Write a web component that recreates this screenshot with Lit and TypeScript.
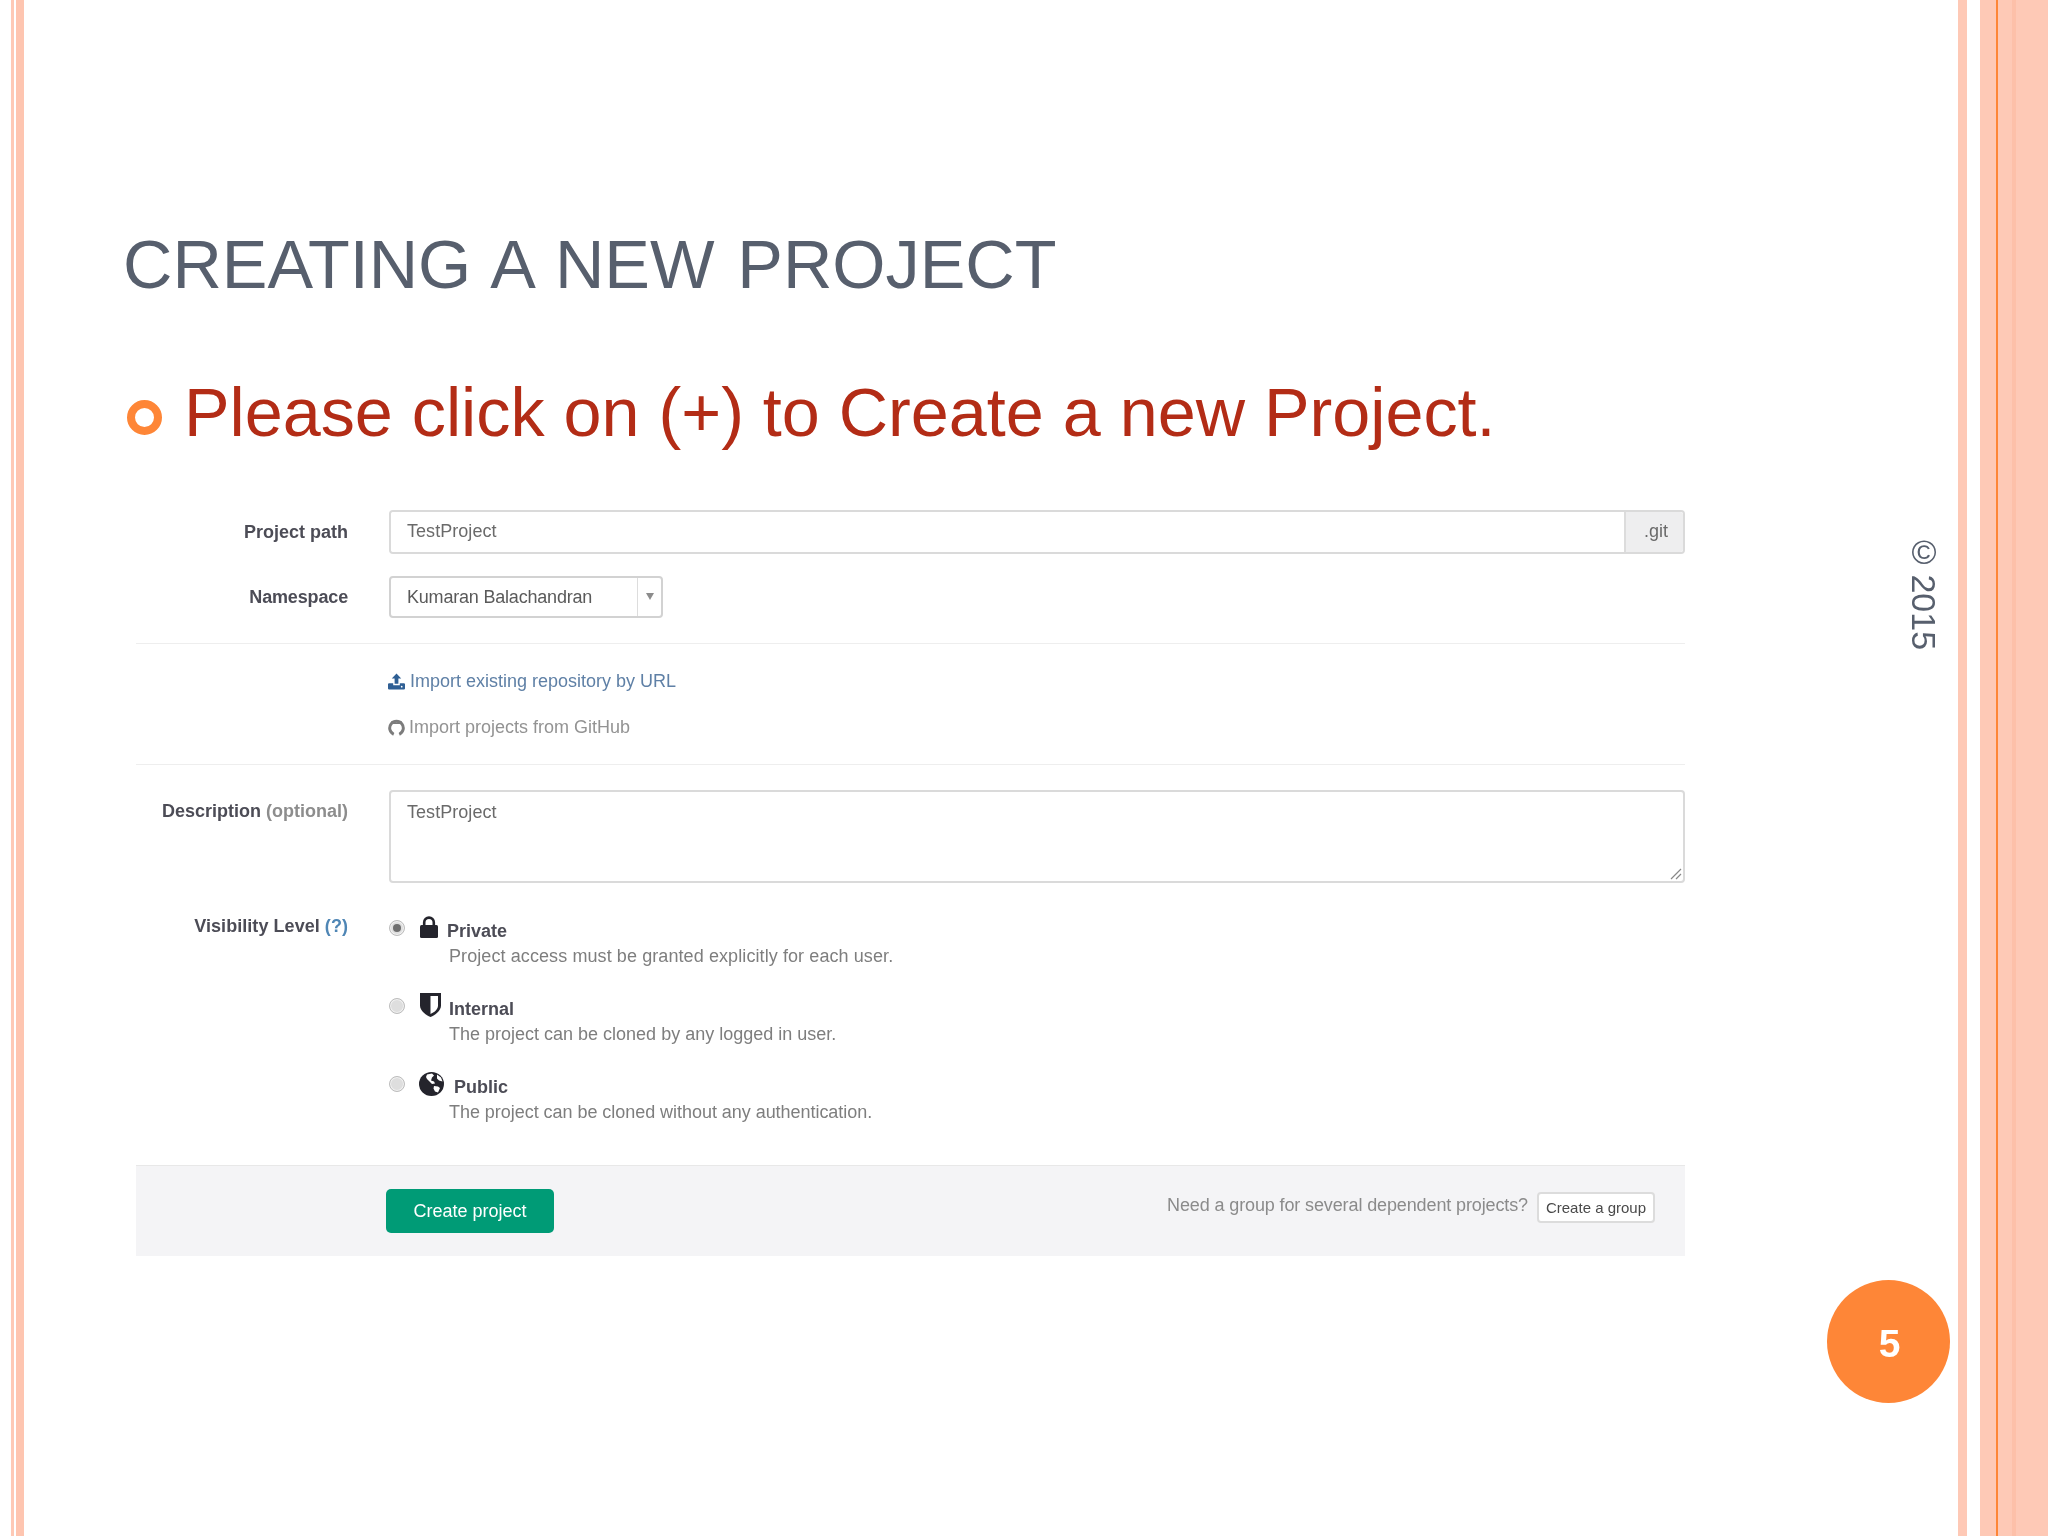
import { LitElement, html, css } from "lit";
import { customElement } from "lit/decorators.js";

@customElement("app-root")
export class AppRoot extends LitElement {
  static styles = css`
    :host { display: block; width: 2048px; height: 1536px; overflow: hidden; }
    * { box-sizing: border-box; }
    .slide { position: relative; display: flex; width: 2048px; height: 1536px; background: #fff; color: #575f6d; font-family: "Liberation Sans", Arial, sans-serif; filter: blur(0.4px); }
    .rail-left { flex: none; width: 24px; display: flex; padding-left: 11px; gap: 2px; }
    .s1 { width: 3px; background: #fec9b6; }
    .s2 { width: 8px; background: #fec5b0; }
    .main { flex: none; width: 1934px; padding: 222px 0 0 100px; }
    .rail-right { flex: none; width: 90px; display: flex; }
    .r1 { width: 9px; background: #fec9b6; }
    .r-gap { width: 13px; }
    .r2 { width: 16px; background: #fec9b6; }
    .r-line { width: 2px; background: #fe8637; }
    .r3 { width: 14px; background: #fec9b6; }
    .r4 { width: 4px; background: #fdc0a9; }
    .r5 { flex: 1; background: #fec9b6; }

    h1 { margin: 0 0 0 -1px; font-size: 68.4px; word-spacing: 3.8px; line-height: 84px; font-weight: 400; color: #575f6d; white-space: nowrap; }
    .bullet { display: flex; align-items: center; height: 80px; margin-top: 66px; color: #b32c16; font-size: 68.3px; line-height: 80px; white-space: nowrap; }
    .ring { flex: none; width: 35px; height: 35px; border: 8.5px solid #fe8637; border-radius: 50%; margin: 10px 22px 0 3px; }

    .form { width: 1549px; margin: 58px 0 0 12px; font-size: 18px; line-height: 24px; color: #555; }
    .row { display: grid; grid-template-columns: 212px 1fr; column-gap: 41px; align-items: center; }
    .label { text-align: right; font-weight: 700; color: #4c4c56; }
    .label.tight { letter-spacing: -0.15px; }
    .label.wide { letter-spacing: 0.05px; }
    .label .muted { color: #8d8d8d; }
    .label .help { color: #4f86b5; }
    .row.namespace { margin-top: 22px; padding-bottom: 25px; border-bottom: 1px solid #eeeeee; }
    .group { display: flex; height: 44px; border: 2px solid #dadada; border-radius: 4px; }
    .field { flex: 1; padding: 0 16px 2px; display: flex; align-items: center; color: #6a6a6a; background: #fff; border-radius: 3px 0 0 3px; letter-spacing: 0.05px; }
    .addon { flex: none; width: 59px; display: flex; align-items: center; justify-content: center; background: #eeeeef; border-left: 2px solid #dcdcdc; color: #6a6a6a; border-radius: 0 3px 3px 0; padding: 0 0 2px 3px; }
    .select { display: flex; width: 274px; height: 42px; border: 2px solid #d2d2d2; border-radius: 4px; }
    .select .value { flex: 1; padding-left: 16px; display: flex; align-items: center; color: #5a5a5a; letter-spacing: -0.2px; }
    .select .arrow { flex: none; width: 24px; border-left: 1px solid #dddddd; display: flex; align-items: center; justify-content: center; padding-bottom: 2px; }
    .tri { width: 0; height: 0; border-left: 4px solid transparent; border-right: 4px solid transparent; border-top: 7px solid #8c8c8c; }

    .imports { padding: 25px 0 25px 252px; border-bottom: 1px solid #eeeeee; display: flex; flex-direction: column; gap: 22px; }
    .imp { display: flex; align-items: center; height: 24px; }
    .imp.link { color: #5f80a6; gap: 5px; }
    .imp.gh { color: #939393; gap: 4px; }
    .imp svg { flex: none; display: block; }

    .row.desc { margin-top: 25px; align-items: start; }
    .row.desc .label { margin-top: 9px; }
    .textarea { position: relative; height: 93px; border: 2px solid #dadada; border-radius: 4px; padding: 8px 16px; color: #6a6a6a; letter-spacing: 0.05px; }
    .grip { position: absolute; right: 0; bottom: 0; display: block; }

    .row.vis { margin-top: 31px; align-items: start; }
    .options { padding-top: 5px; display: flex; flex-direction: column; gap: 29px; margin-bottom: 41px; }
    .title { display: flex; height: 24px; align-items: center; font-weight: 700; color: #4c4c56; }
    .radio { flex: none; width: 16px; height: 16px; border-radius: 50%; border: 1px solid #bdbdbd; background: #dedede; box-shadow: inset 0 0 0 1px #f2f2f2; margin: -7px 15px 0 0; display: flex; align-items: center; justify-content: center; }
    .radio i { width: 8px; height: 8px; border-radius: 50%; background: #6e6e6e; }
    .title svg { flex: none; display: block; }
    .ic-lock { margin: -9px 9px 0 0; }
    .ic-shield { margin: -9px 8px 0 0; }
    .ic-globe { margin: -7px 10px 0 -1px; }
    .sub { padding-left: 60px; color: #7e7e7e; margin-top: 1px; }
    .sub.wide { letter-spacing: 0.09px; }
    .sub.narrow { letter-spacing: -0.04px; }

    .footer { height: 91px; background: #f4f4f6; border-top: 1px solid #e8e8e8; display: flex; align-items: flex-start; padding: 23px 30px 0 250px; }
    .primary { flex: none; width: 168px; height: 44px; border-radius: 5px; background: #009b76; color: #fff; display: flex; align-items: center; justify-content: center; }
    .hint { margin-left: auto; color: #8b8b8b; margin-top: 4px; letter-spacing: -0.12px; }
    .secondary { flex: none; width: 118px; height: 31px; margin: 3px 0 0 9px; background: #fff; border: 2px solid #dcdcdc; border-radius: 4px; color: #4a4a4a; font-size: 15px; display: flex; align-items: center; justify-content: center; }

    .copy { position: absolute; left: 1904px; top: 533px; font-size: 34px; line-height: 40px; word-spacing: -6px; writing-mode: vertical-rl; white-space: nowrap; color: #575f6d; }
    .page { position: absolute; left: 1827px; top: 1280px; width: 123px; height: 123px; border-radius: 50%; background: #fe8637; color: #fff; font-weight: 700; font-size: 39px; display: flex; align-items: center; justify-content: center; padding: 5px 0 0 2px; }
  `;

  render() {
    return html`
      <div class="slide">
        <div class="rail-left"><div class="s1"></div><div class="s2"></div></div>
        <div class="main">
          <h1>CREATING A NEW PROJECT</h1>
          <div class="bullet"><span class="ring"></span><span>Please click on (+) to Create a new Project.</span></div>
          <div class="form">
            <div class="row">
              <div class="label">Project path</div>
              <div class="group"><div class="field">TestProject</div><div class="addon">.git</div></div>
            </div>
            <div class="row namespace">
              <div class="label tight">Namespace</div>
              <div class="select"><div class="value">Kumaran Balachandran</div><div class="arrow"><span class="tri"></span></div></div>
            </div>
            <div class="imports">
              <div class="imp link">
                <svg width="17" height="17" viewBox="0 0 18 17"><path fill="#2f5f94" d="M9 0l5 5.4h-3V11H7V5.4H4z"/><path fill="#2f5f94" d="M0 11.5q0-1.2 1.2-1.2H5.5V12.5h7V10.3h4.3q1.2 0 1.2 1.2v4.3q0 1.2-1.2 1.2H1.2Q0 17 0 15.8z"/><circle cx="14.5" cy="14" r=".9" fill="#fff"/></svg>
                <span>Import existing repository by URL</span>
              </div>
              <div class="imp gh">
                <svg width="17" height="17" viewBox="0 0 16 16"><path fill="none" stroke="#7c7c7c" stroke-width="2.8" d="M5.4 14.4A6.4 6.4 0 1 1 10.6 14.4"/><path fill="#7c7c7c" d="M3.2 1.8l2.6 1.4h4.4l2.6-1.4.6 3h-10.8z"/></svg>
                <span>Import projects from GitHub</span>
              </div>
            </div>
            <div class="row desc">
              <div class="label">Description <span class="muted">(optional)</span></div>
              <div class="textarea">TestProject
                <svg class="grip" width="14" height="14" viewBox="0 0 14 14"><path stroke="#888" stroke-width="1.2" d="M2 12L12 2M7 12l5-5"/></svg>
              </div>
            </div>
            <div class="row vis">
              <div class="label wide">Visibility Level <span class="help">(?)</span></div>
              <div class="options">
                <div>
                  <div class="title">
                    <span class="radio"><i></i></span>
                    <svg class="ic-lock" width="18" height="22" viewBox="0 0 18 22"><path fill="none" stroke="#24242c" stroke-width="2.6" d="M4.2 10V6.4a4.8 4.8 0 0 1 9.6 0V10"/><rect y="9" width="18" height="13" rx="1.5" fill="#24242c"/></svg>
                    <span>Private</span>
                  </div>
                  <div class="sub wide">Project access must be granted explicitly for each user.</div>
                </div>
                <div>
                  <div class="title">
                    <span class="radio"></span>
                    <svg class="ic-shield" width="21" height="24" viewBox="0 0 21 24"><path fill="#24242c" d="M0 0H21V12.5C21 18 15 22 10.5 24 6 22 0 18 0 12.5z"/><path fill="#fff" d="M10.5 3H18V12.5C18 16.5 14 19.5 10.5 21z"/></svg>
                    <span>Internal</span>
                  </div>
                  <div class="sub">The project can be cloned by any logged in user.</div>
                </div>
                <div>
                  <div class="title">
                    <span class="radio"></span>
                    <svg class="ic-globe" width="25" height="24" viewBox="0 0 25 24"><ellipse cx="12.5" cy="12" rx="12.5" ry="12" fill="#24242c"/><path fill="#fff" d="M8 2.5l5-1 2 2-2 2-1 3 3 1 1 2-3 .5-3-3-2-2-1-2zM18 2.5l4 3 1.5 4-3.5-1-2-2zM15 14l4 .5 2 1.5-2 4.5-3-1-1.5-3z"/></svg>
                    <span>Public</span>
                  </div>
                  <div class="sub narrow">The project can be cloned without any authentication.</div>
                </div>
              </div>
            </div>
            <div class="footer">
              <div class="primary">Create project</div>
              <div class="hint">Need a group for several dependent projects?</div>
              <div class="secondary">Create a group</div>
            </div>
          </div>
        </div>
        <div class="rail-right">
          <div class="r1"></div><div class="r-gap"></div><div class="r2"></div><div class="r-line"></div><div class="r3"></div><div class="r4"></div><div class="r5"></div>
        </div>
        <div class="copy">© 2015</div>
        <div class="page">5</div>
      </div>
    `;
  }
}
